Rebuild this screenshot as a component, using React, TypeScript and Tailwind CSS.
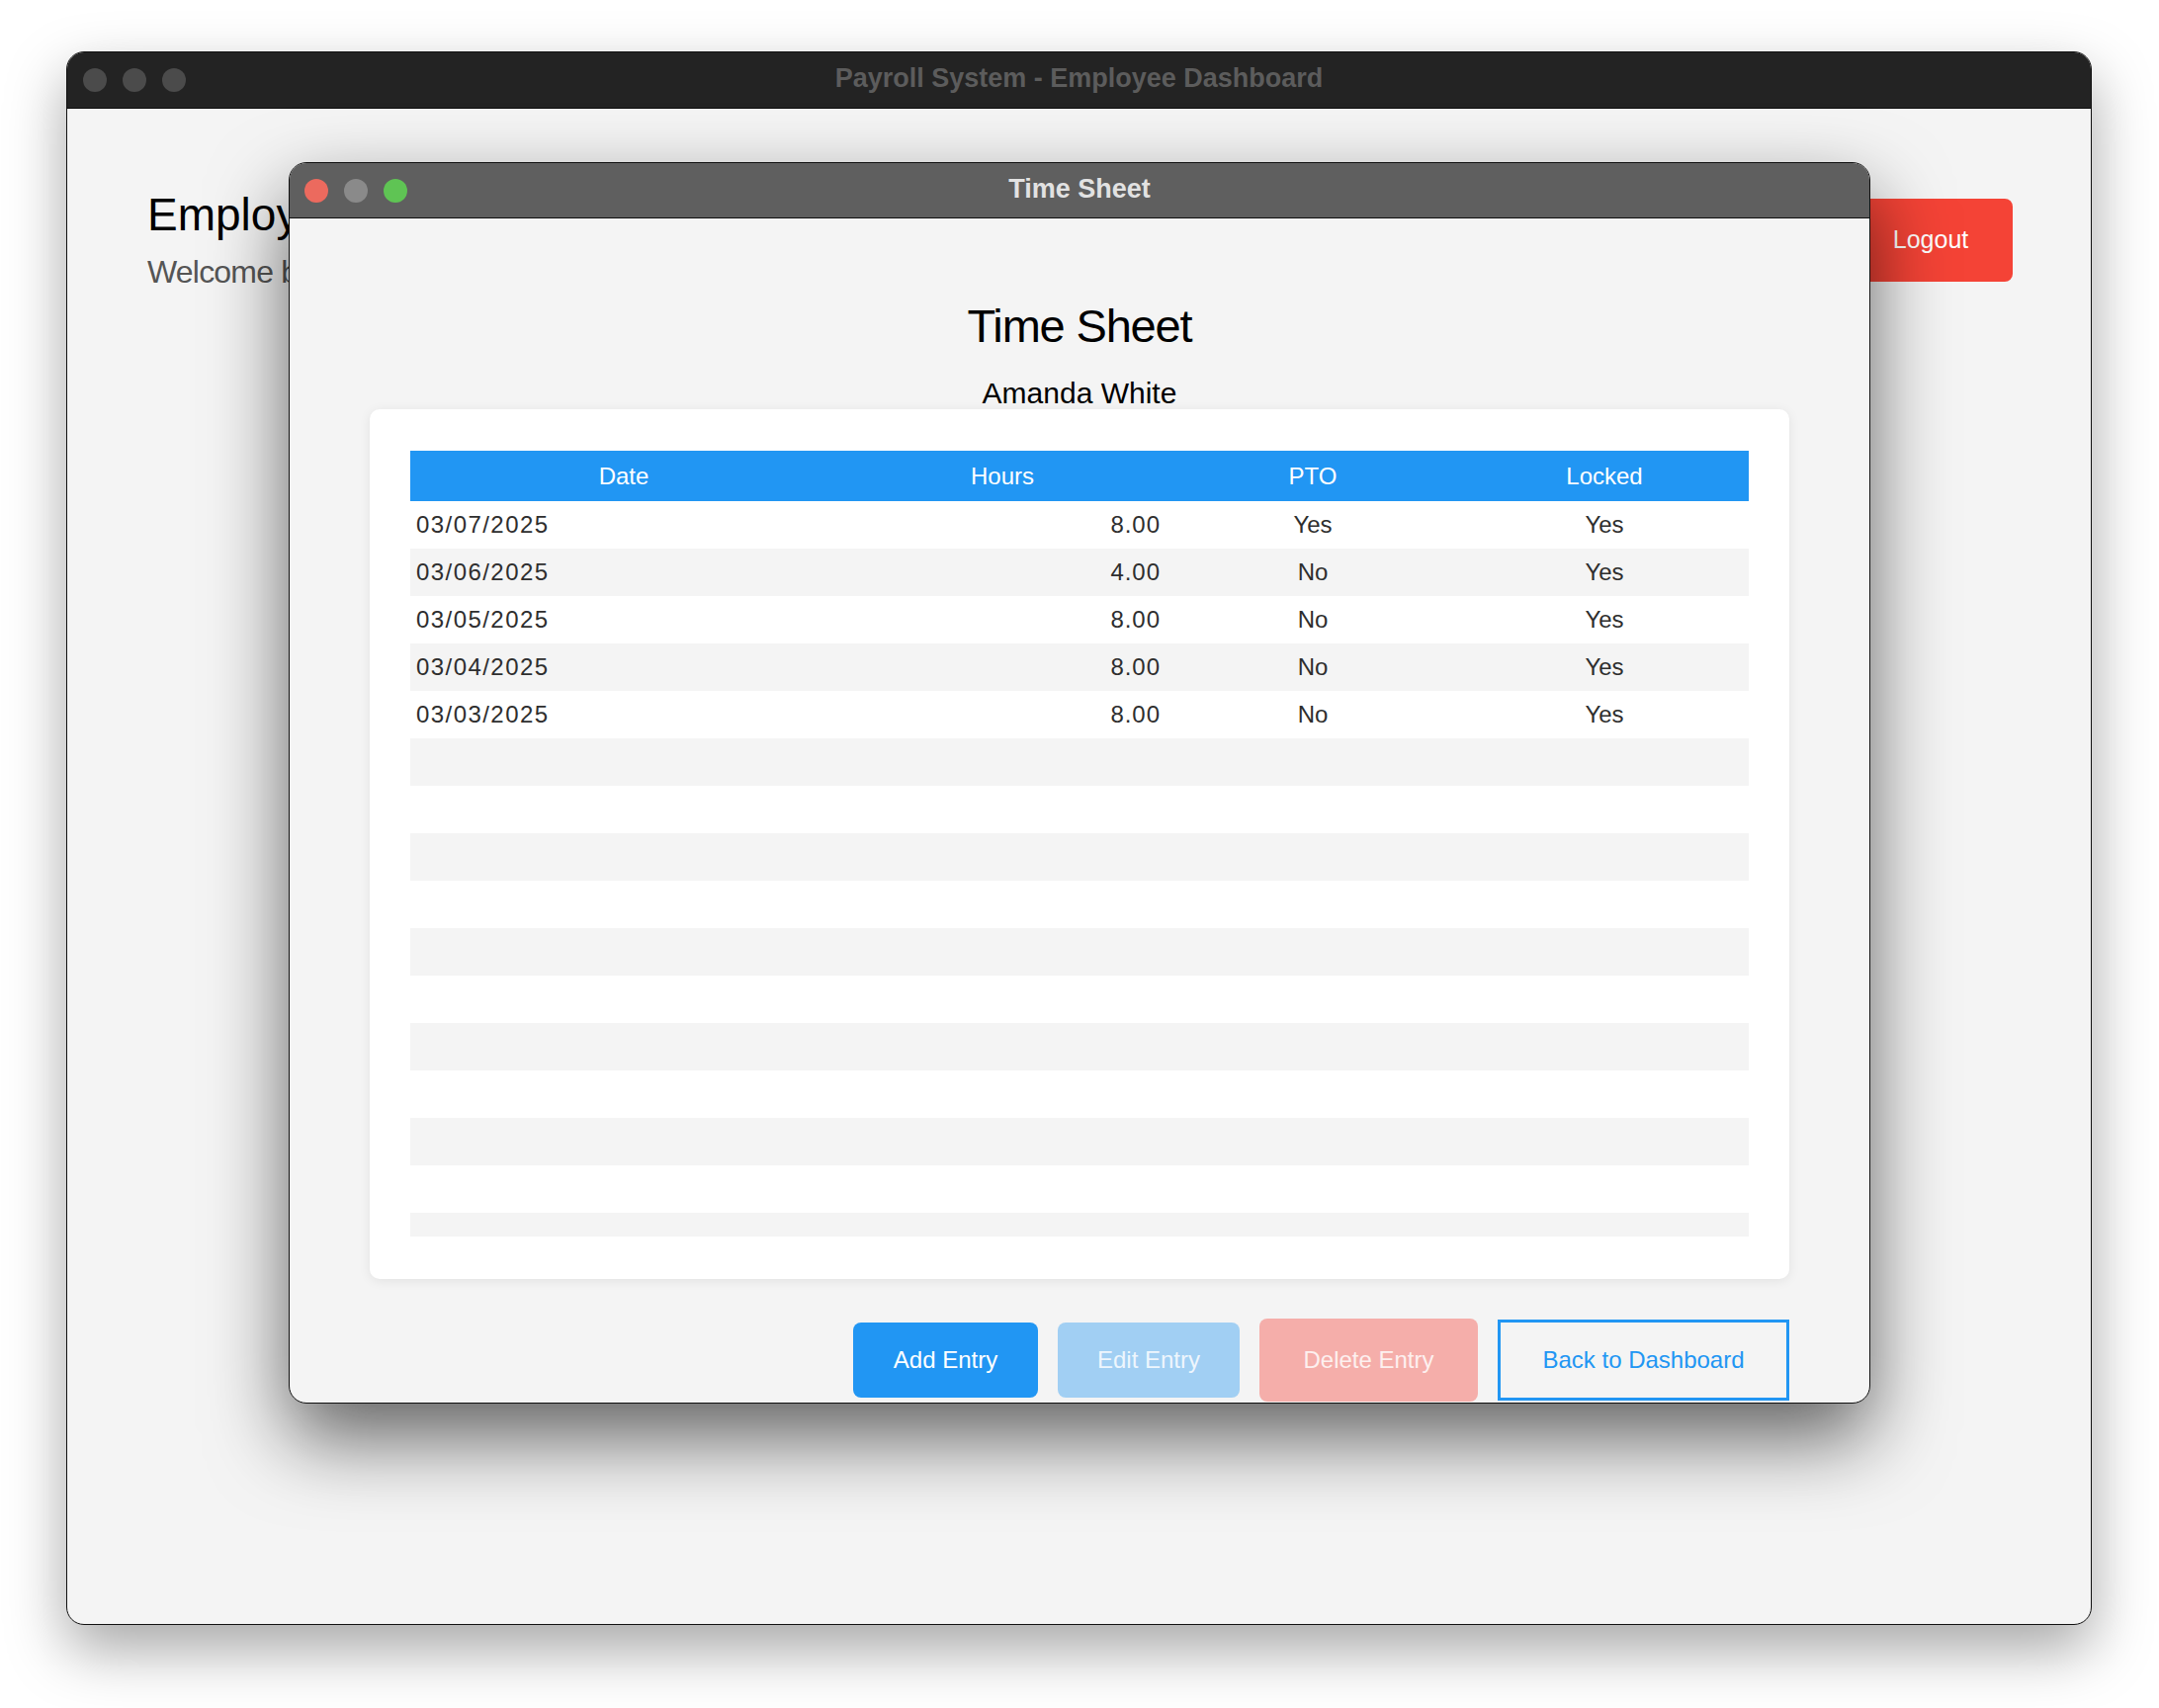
const entries = [
  { date: "03/07/2025", hours: "8.00", pto: "Yes", locked: "Yes" },
  { date: "03/06/2025", hours: "4.00", pto: "No", locked: "Yes" },
  { date: "03/05/2025", hours: "8.00", pto: "No", locked: "Yes" },
  { date: "03/04/2025", hours: "8.00", pto: "No", locked: "Yes" },
  { date: "03/03/2025", hours: "8.00", pto: "No", locked: "Yes" },
];

const cols = "grid grid-cols-[432px_334px_294px_296px]";

function TrafficLights({ active }: { active: boolean }) {
  return (
    <div className="flex gap-4">
      <span className={`h-6 w-6 rounded-full ${active ? "bg-[#ec6a5e]" : "bg-[#4b4b4b]"}`} />
      <span className={`h-6 w-6 rounded-full ${active ? "bg-[#8a8a8a]" : "bg-[#4b4b4b]"}`} />
      <span className={`h-6 w-6 rounded-full ${active ? "bg-[#5fc454]" : "bg-[#4b4b4b]"}`} />
    </div>
  );
}

function TimeSheetTable() {
  const rows = Array.from({ length: 16 }, (_, i) => entries[i]);

  return (
    <div className="h-[795px] overflow-hidden">
      <div className={`${cols} h-[51px] items-center bg-[#2196f3] text-center text-[24px] text-white`}>
        <span>Date</span>
        <span>Hours</span>
        <span>PTO</span>
        <span>Locked</span>
      </div>
      {rows.map((row, i) => (
        <div
          key={i}
          className={`${cols} h-[48px] items-center text-[24px] text-[#2e2e2e] ${
            i % 2 === 1 ? "bg-[#f4f4f4]" : "bg-white"
          }`}
        >
          {row && (
            <>
              <span className="pl-[6px] tracking-[0.06em]">{row.date}</span>
              <span className="pr-[7px] text-right tracking-[0.04em]">{row.hours}</span>
              <span className="text-center">{row.pto}</span>
              <span className="text-center">{row.locked}</span>
            </>
          )}
        </div>
      ))}
    </div>
  );
}

function TimeSheetWindow() {
  return (
    <div className="absolute left-[292px] top-[164px] flex h-[1256px] w-[1600px] flex-col overflow-hidden rounded-[18px] border border-[#111] bg-[#f4f4f4] shadow-[0_35px_80px_rgba(0,0,0,0.6)]">
      <div className="relative flex h-[56px] shrink-0 items-center border-b border-[#111] bg-[#5f5f5f] pl-[15px]">
        <TrafficLights active />
        <span className="absolute inset-x-0 -mt-[2px] text-center text-[27px] font-bold text-[#e2e2e2]">
          Time Sheet
        </span>
      </div>
      <div className="flex flex-col items-center pt-[85px]">
        <h1 className="text-[47px] leading-none tracking-tight text-black">Time Sheet</h1>
        <p className="mt-[30px] text-[30px] leading-none text-black">Amanda White</p>
      </div>
      <div className="mx-[81px] mt-[1px] h-[880px] shrink-0 rounded-[10px] bg-white px-[41px] pb-[43px] pt-[42px] shadow-[0_2px_12px_rgba(0,0,0,0.08)]">
        <TimeSheetTable />
      </div>
      <div className="mt-[40px] flex items-center justify-end gap-5 pr-[81px] text-[24px]">
        <button className="h-[76px] w-[187px] rounded-[8px] bg-[#2196f3] text-white">Add Entry</button>
        <button className="h-[76px] w-[184px] rounded-[8px] bg-[#a1cff3] text-[#eef6fd]">Edit Entry</button>
        <button className="h-[84px] w-[221px] rounded-[8px] bg-[#f5aeaa] text-[#fdf0ef]">Delete Entry</button>
        <button className="h-[82px] w-[295px] border-[3px] border-[#2196f3] text-[#2196f3]">
          Back to Dashboard
        </button>
      </div>
    </div>
  );
}

export default function App() {
  return (
    <div className="relative h-[1728px] w-[2184px] bg-white pl-[67px] pt-[52px] font-['Liberation_Sans',Arial,sans-serif]">
      <div className="flex h-[1592px] w-[2049px] flex-col overflow-hidden rounded-[18px] border border-[#111] bg-[#f4f4f4] shadow-[0_25px_60px_rgba(0,0,0,0.35)]">
        <div className="relative flex h-[57px] shrink-0 items-center border-b border-[#0c0c0c] bg-[#232323] pl-[16px]">
          <TrafficLights active={false} />
          <span className="absolute inset-x-0 -mt-[4px] text-center text-[27px] font-bold text-[#5c5c5c]">
            Payroll System - Employee Dashboard
          </span>
        </div>
        <div className="flex items-start justify-between pl-[81px] pr-[79px] pt-[84px]">
          <div>
            <h1 className="text-[46px] leading-none text-black">Employee Dashboard</h1>
            <p className="mt-[19px] text-[32px] leading-none tracking-tight text-[#555]">
              Welcome back, Amanda White
            </p>
          </div>
          <button className="mt-[7px] h-[84px] w-[166px] rounded-[8px] bg-[#f44336] text-[25px] text-white">
            Logout
          </button>
        </div>
      </div>
      <TimeSheetWindow />
    </div>
  );
}
